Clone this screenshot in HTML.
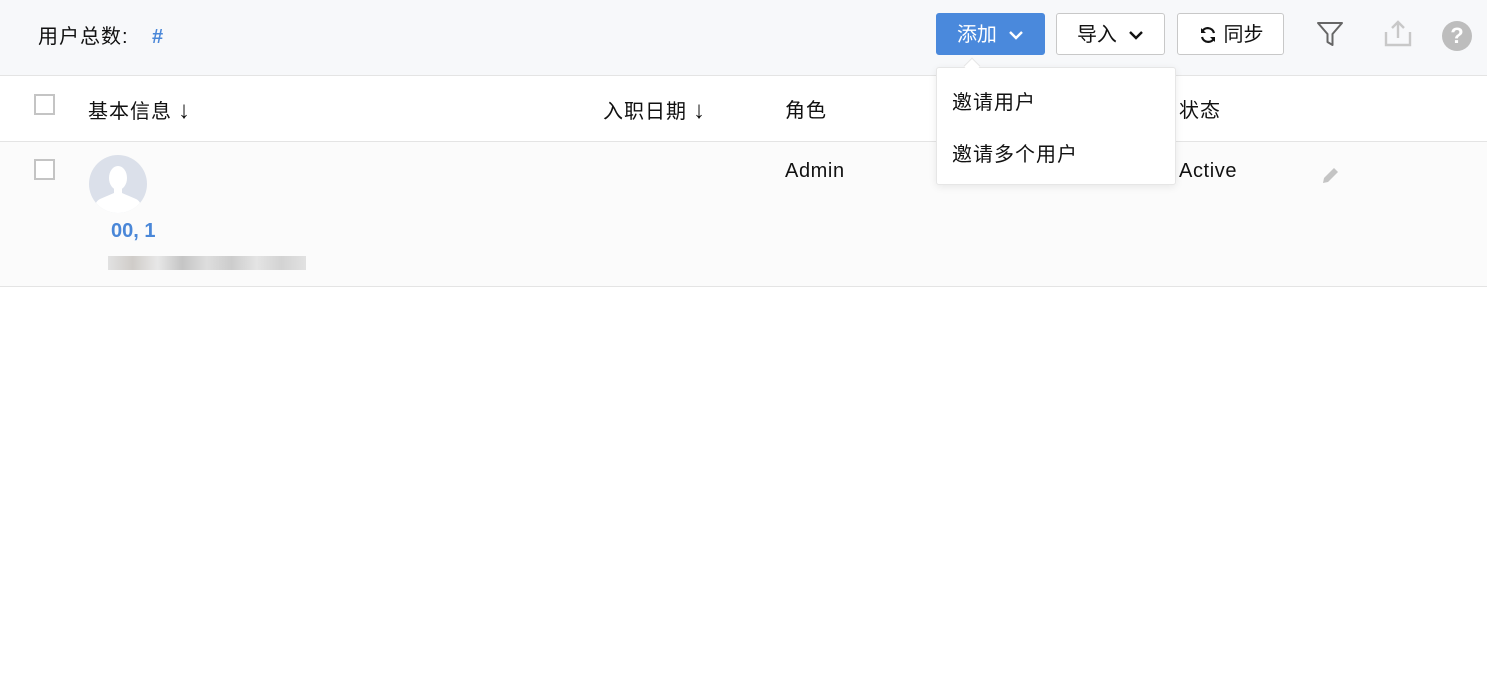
<!DOCTYPE html>
<html><head><meta charset="utf-8"><style>
*{box-sizing:border-box;margin:0;padding:0}
body{width:1487px;height:682px;background:#fff;font-family:"Liberation Sans","Noto Sans CJK SC",sans-serif;color:#111;position:relative;overflow:hidden;font-size:20px;line-height:24px}
.top{position:absolute;left:0;top:0;width:1487px;height:76px;background:#f7f8fa;border-bottom:1px solid #e4e4e4}
.abs{position:absolute}
.btn{position:absolute;top:13px;height:42px;border:1px solid #c8c8c8;border-radius:3px;background:#fff;font-size:20px;display:flex;align-items:center;justify-content:center;padding-top:2px}
.cb{position:absolute;width:21px;height:21px;border:2px solid #c4c4c4;background:#fff}
.ar{font-size:24px;margin-left:6px}
</style></head><body>
<div class="top"></div>
<div class="abs" style="left:38px;top:25px;letter-spacing:1px">用户总数:</div>
<div class="abs" style="left:152px;top:25px;color:#4a87d8;font-weight:bold">#</div>
<div class="btn" style="left:936px;width:109px;background:#4a89dc;border-color:#4a89dc;color:#fff">添加&nbsp;&nbsp;<svg width="16" height="10" viewBox="0 0 16 10"><path d="M2 2l6 6 6-6" stroke="#fff" stroke-width="2.4" fill="none"/></svg></div>
<div class="btn" style="left:1056px;width:109px">导入&nbsp;&nbsp;<svg width="16" height="10" viewBox="0 0 16 10"><path d="M2 2l6 6 6-6" stroke="#111" stroke-width="2.4" fill="none"/></svg></div>
<div class="btn" style="left:1177px;width:107px"><svg width="20" height="20" viewBox="0 0 20 20" style="margin-right:6px"><path d="M16 8A6.5 6.5 0 0 0 4 6.5M4 12a6.5 6.5 0 0 0 12 1.5" stroke="#111" stroke-width="2.2" fill="none"/><path d="M3 3v5h5z M17 17v-5h-5z" fill="#111"/></svg>同步</div>
<svg class="abs" style="left:1316px;top:20px" width="28" height="28" viewBox="0 0 28 28"><path d="M2 3h24l-9.5 11v11l-5-3v-8z" stroke="#666" stroke-width="2" fill="none" stroke-linejoin="round"/></svg>
<svg class="abs" style="left:1384px;top:19px" width="28" height="28" viewBox="0 0 28 28"><path d="M2 13v13h24V13" stroke="#c8c8c8" stroke-width="2.4" fill="none"/><path d="M14 19V3M8 9l6-6 6 6" stroke="#c8c8c8" stroke-width="2.4" fill="none"/></svg>
<div class="abs" style="left:1442px;top:21px;width:30px;height:30px;border-radius:50%;background:#bdbdbd;color:#fff;font-weight:bold;font-size:22px;text-align:center;line-height:30px">?</div>
<div class="cb" style="left:34px;top:94px"></div>
<div class="abs" style="left:88px;top:99px;letter-spacing:1px">基本信息<span class="ar">↓</span></div>
<div class="abs" style="left:603px;top:99px;letter-spacing:1px">入职日期<span class="ar">↓</span></div>
<div class="abs" style="left:785px;top:99px;letter-spacing:1px">角色</div>
<div class="abs" style="left:1179px;top:99px;letter-spacing:1px">状态</div>
<div class="abs" style="left:0;top:141px;width:1487px;height:146px;background:#fbfbfb;border-top:1px solid #e4e4e4;border-bottom:1px solid #e4e4e4"></div>
<div class="cb" style="left:34px;top:159px"></div>
<svg class="abs" style="left:88px;top:154px" width="60" height="60" viewBox="0 0 60 60"><clipPath id="c"><circle cx="30" cy="30" r="29"/></clipPath><circle cx="30" cy="30" r="29" fill="#dbe0ea"/><g clip-path="url(#c)" fill="#fff"><ellipse cx="30" cy="24" rx="9" ry="12"/><path d="M26 34h8v5l14 6c4 2 6 6 6 15H6c0-9 2-13 6-15l14-6z"/></g></svg>
<div class="abs" style="left:111px;top:219px;color:#4a87d8;font-weight:bold">00, 1</div>
<div class="abs" style="left:108px;top:256px;width:198px;height:14px;background:linear-gradient(90deg,#ddd,#c8c4c0,#e4e4e4,#bbb,#d8d8d8,#c4c4c4,#e0e0e0,#ccc,#ddd);opacity:.85"></div>
<div class="abs" style="left:785px;top:159px;letter-spacing:.6px">Admin</div>
<div class="abs" style="left:1179px;top:159px;letter-spacing:.6px">Active</div>
<svg class="abs" style="left:1320px;top:165px" width="22" height="20" viewBox="0 0 22 20"><path d="M3 18l1-5L14 3l4 4-10 10z" fill="#c4c4c4"/></svg>
<div class="abs" style="left:936px;top:67px;width:240px;height:118px;background:#fff;border:1px solid #e6e6e6;border-radius:3px;box-shadow:0 2px 8px rgba(0,0,0,.08)"></div>
<div class="abs" style="left:966px;top:60px;width:12px;height:12px;background:#fff;border-left:1px solid #e6e6e6;border-top:1px solid #e6e6e6;transform:rotate(45deg)"></div>
<div class="abs" style="left:952px;top:91px;letter-spacing:1px">邀请用户</div>
<div class="abs" style="left:952px;top:143px;letter-spacing:1px">邀请多个用户</div>
</body></html>
